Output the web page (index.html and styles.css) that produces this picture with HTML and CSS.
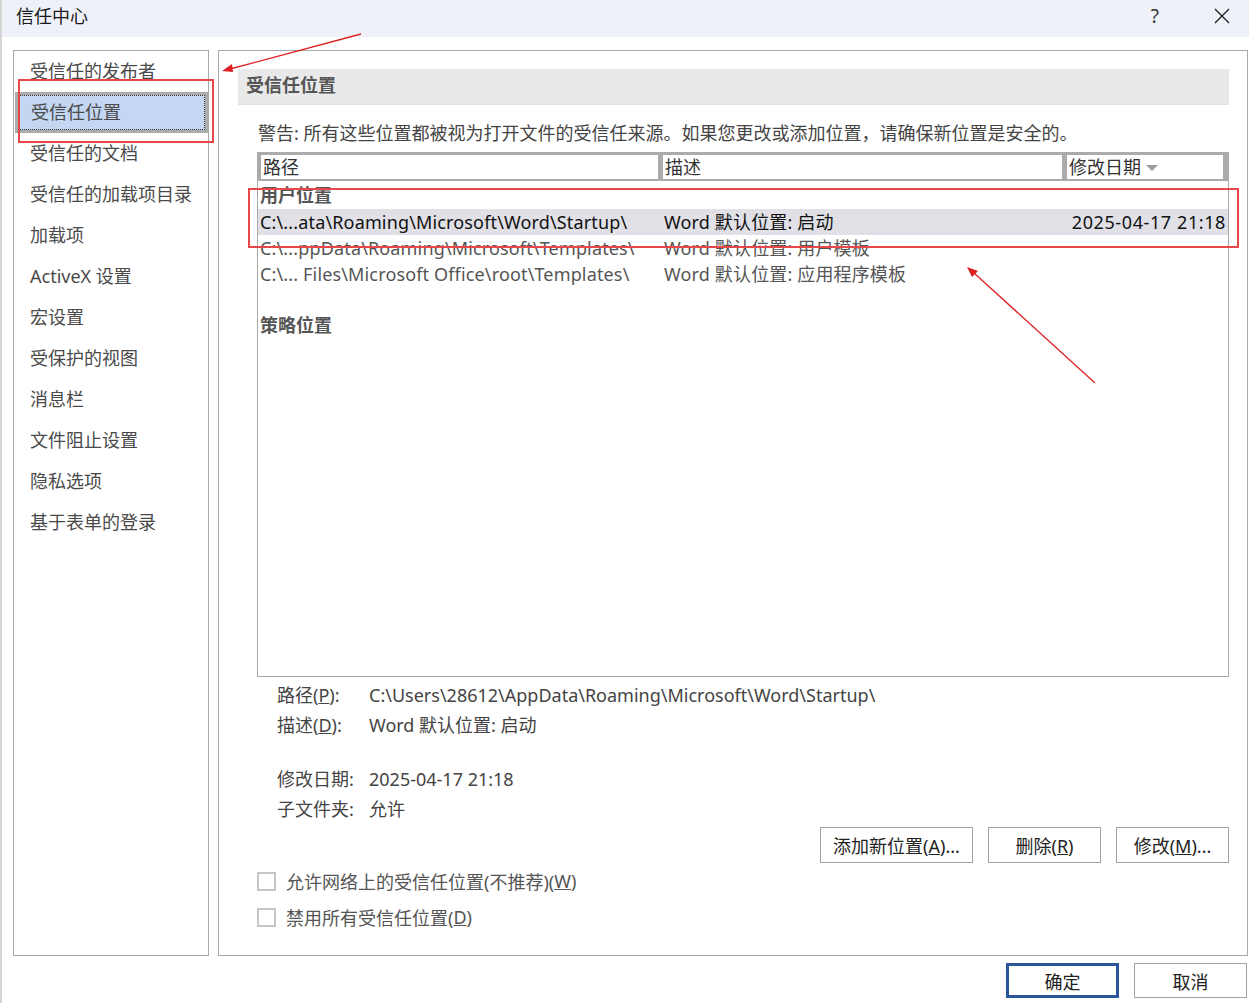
FILE: index.html
```html
<!DOCTYPE html>
<html lang="zh-CN">
<head>
    <meta charset="UTF-8">
    <title>信任中心</title>
    <link rel="stylesheet" href="styles.css">
</head>
<body>
    <div class="dialog">
        <div class="titlebar">
            <span class="title">信任中心</span>
            <span class="help">?</span>
            <svg class="close" width="18" height="18" viewBox="0 0 18 18">
                <path d="M2 2 L16 16 M16 2 L2 16" stroke="#222" stroke-width="1.4" fill="none"/>
            </svg>
        </div>

        <div class="main">
            <ul class="nav">
                <li>受信任的发布者</li>
                <li class="active"><span>受信任位置</span></li>
                <li>受信任的文档</li>
                <li>受信任的加载项目录</li>
                <li>加载项</li>
                <li>ActiveX 设置</li>
                <li>宏设置</li>
                <li>受保护的视图</li>
                <li>消息栏</li>
                <li>文件阻止设置</li>
                <li>隐私选项</li>
                <li>基于表单的登录</li>
            </ul>

            <div class="panel">
                <div class="section-title">受信任位置</div>
                <div class="content">
                    <p class="warning">警告: 所有这些位置都被视为打开文件的受信任来源。如果您更改或添加位置，请确保新位置是安全的。</p>

                    <div class="listview">
                        <div class="list-head">
                            <div class="col">路径</div>
                            <div class="col">描述</div>
                            <div class="col">修改日期<span class="sort"></span></div>
                        </div>
                        <div class="group">用户位置</div>
                        <div class="row selected">
                            <span class="c-path">C:\...ata\Roaming\Microsoft\Word\Startup\</span>
                            <span class="c-desc">Word 默认位置: 启动</span>
                            <span class="c-date">2025-04-17 21:18</span>
                        </div>
                        <div class="row">
                            <span class="c-path">C:\...ppData\Roaming\Microsoft\Templates\</span>
                            <span class="c-desc">Word 默认位置: 用户模板</span>
                            <span class="c-date"></span>
                        </div>
                        <div class="row">
                            <span class="c-path">C:\... Files\Microsoft Office\root\Templates\</span>
                            <span class="c-desc">Word 默认位置: 应用程序模板</span>
                            <span class="c-date"></span>
                        </div>
                        <div class="row empty"></div>
                        <div class="group">策略位置</div>
                    </div>

                    <div class="details">
                        <div class="detail"><span class="label">路径(<u>P</u>):</span><span>C:\Users\28612\AppData\Roaming\Microsoft\Word\Startup\</span></div>
                        <div class="detail"><span class="label">描述(<u>D</u>):</span><span>Word 默认位置: 启动</span></div>
                        <div class="detail spaced"><span class="label">修改日期:</span><span>2025-04-17 21:18</span></div>
                        <div class="detail"><span class="label">子文件夹:</span><span>允许</span></div>
                    </div>

                    <div class="actions">
                        <button class="btn wide">添加新位置(<u>A</u>)...</button>
                        <button class="btn">删除(<u>R</u>)</button>
                        <button class="btn">修改(<u>M</u>)...</button>
                    </div>

                    <label class="check"><span class="box"></span>允许网络上的受信任位置(不推荐)(<u>W</u>)</label>
                    <label class="check"><span class="box"></span>禁用所有受信任位置(<u>D</u>)</label>
                </div>
            </div>
        </div>

        <div class="footer">
            <button class="btn primary">确定</button>
            <button class="btn">取消</button>
        </div>
    </div>

    <!-- 标注 -->
    <svg class="marks" width="1249" height="1003" viewBox="0 0 1249 1003">
        <rect x="19" y="80" width="194" height="62" fill="none" stroke="#e8474a" stroke-width="2"/>
        <rect x="249" y="189" width="989" height="58" fill="none" stroke="#e8474a" stroke-width="2"/>
        <line x1="361" y1="34" x2="230" y2="69" stroke="#e02020" stroke-width="1.3"/>
        <path d="M222 71 L232 64 L233 72 Z" fill="#e02020"/>
        <line x1="1095" y1="383" x2="974" y2="273" stroke="#e02020" stroke-width="1.3"/>
        <path d="M967 267 L978 271 L972 277 Z" fill="#e02020"/>
    </svg>
</body>
</html>
```

FILE: styles.css
```css
* {
    box-sizing: border-box;
    margin: 0;
    padding: 0;
}

body {
    font-family: "Noto Sans", "Noto Sans CJK SC", sans-serif;
    font-size: 18px;
    color: #444;
    background: #fff;
    width: 1249px;
    height: 1003px;
    overflow: hidden;
    position: relative;
}

.dialog {
    border-left: 2px solid #d4d4d4;
    height: 1003px;
}

.titlebar {
    height: 37px;
    background: #eef2f8;
    display: flex;
    align-items: center;
    padding: 0 0 5px 14px;
    color: #1a1a1a;
}

.titlebar .title {
    flex: 1;
    line-height: 1;
}

.titlebar .help {
    font-size: 19px;
    margin-right: 54px;
    color: #333;
}

.titlebar .close {
    margin-right: 18px;
}

.main {
    display: flex;
    gap: 9px;
    padding: 13px 0 0 11px;
    height: 919px;
}

/* 左侧导航 */
.nav {
    list-style: none;
    width: 196px;
    border: 1px solid #a8a8a8;
    color: #4a4a4a;
}

.nav li {
    height: 41px;
    line-height: 40px;
    padding-left: 16px;
    white-space: nowrap;
}

.nav li.active {
    border: 3px solid #ababab;
    background: #c3d6f2;
    padding-left: 0;
    line-height: 35px;
    margin: 0 0 0 1px;
}

.nav li.active span {
    display: block;
    height: 35px;
    border: 1px dotted #333;
    padding-left: 12px;
    line-height: 33px;
}

/* 右侧面板 */
.panel {
    width: 1030px;
    border: 1px solid #a8a8a8;
    padding: 18px 18px 0 19px;
}

.section-title {
    height: 36px;
    line-height: 32px;
    background: #e9e9e9;
    border-bottom: 1px solid #e2e2e2;
    padding-left: 8px;
    font-weight: bold;
    color: #555;
}

.content {
    padding-left: 19px;
}

.warning {
    margin-top: 15px;
    line-height: 26px;
    height: 26px;
    padding-left: 1px;
    white-space: nowrap;
}

.listview {
    margin-top: 6px;
    height: 525px;
    border: 1px solid #a8a8a8;
    border-top: none;
}

.list-head {
    display: grid;
    grid-template-columns: 397px 399px 156px;
    gap: 5px;
    background: #ababab;
    padding: 3px 3px 2px 4px;
    margin: 0 -1px;
    color: #333;
}

.list-head .col {
    background: #fff;
    height: 24px;
    line-height: 24px;
    padding-left: 2px;
    display: flex;
    align-items: center;
}

.sort {
    width: 0;
    height: 0;
    border-left: 6px solid transparent;
    border-right: 6px solid transparent;
    border-top: 6px solid #a09e96;
    margin-left: 5px;
    margin-top: 2px;
}

.group {
    height: 26px;
    line-height: 25px;
    padding-left: 2px;
    font-weight: bold;
    color: #555;
}

.list-head + .group {
    margin-top: 2px;
}

.row {
    display: flex;
    height: 26px;
    line-height: 26px;
    color: #555;
    white-space: nowrap;
    letter-spacing: 0.15px;
}

.row.selected {
    background: #e0e0e6;
    color: #111;
}

.c-path {
    width: 406px;
    padding-left: 2px;
    overflow: hidden;
}

.c-desc {
    flex: 1;
}

.c-date {
    padding-right: 2px;
    letter-spacing: 0.6px;
}

.details {
    padding-left: 20px;
    margin-top: 3px;
}

.detail {
    display: flex;
    height: 30px;
    line-height: 30px;
}

.detail.spaced {
    margin-top: 24px;
}

.detail .label {
    width: 92px;
}

.actions {
    display: flex;
    justify-content: flex-end;
    gap: 15px;
    margin-top: 3px;
}

.btn {
    font-family: inherit;
    font-size: 18px;
    color: #222;
    background: #fff;
    border: 1px solid #a3a3a3;
    width: 113px;
    height: 36px;
}

.btn.wide {
    width: 153px;
}

.check {
    display: flex;
    align-items: center;
    height: 36px;
    color: #555;
}

.check .box {
    width: 19px;
    height: 19px;
    border: 2px solid #c6c6c6;
    margin-right: 10px;
}

.footer {
    display: flex;
    justify-content: flex-end;
    gap: 15px;
    padding-top: 7px;
    padding-right: 2px;
}

.footer .btn {
    height: 35px;
}

.footer .btn.primary {
    border: 3px solid #2b579a;
}

.marks {
    position: absolute;
    top: 0;
    left: 0;
    pointer-events: none;
}
```
